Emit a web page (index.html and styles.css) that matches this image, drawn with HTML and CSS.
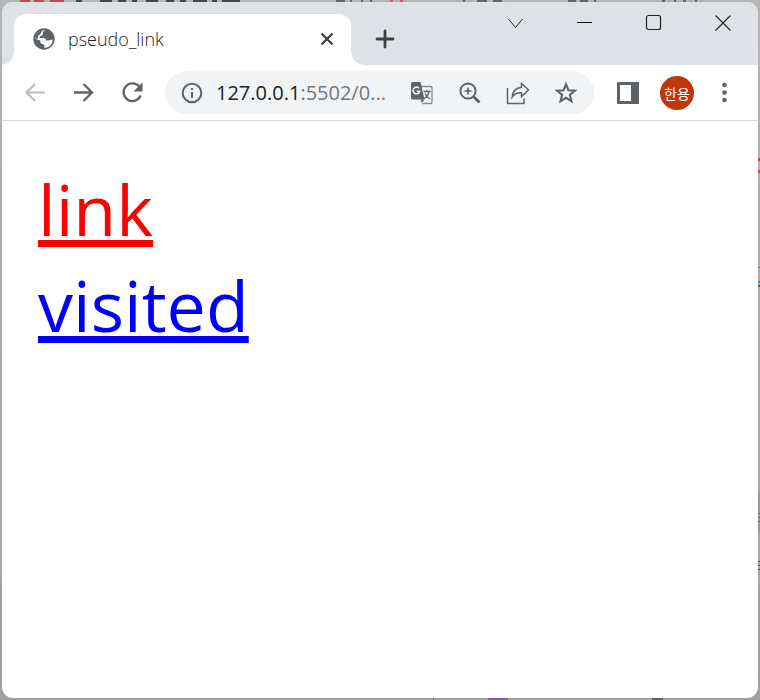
FILE: index.html
```html
<!DOCTYPE html>
<html lang="ko">
<head>
<meta charset="utf-8">
<title>pseudo_link</title>
<link rel="stylesheet" href="styles.css">
</head>
<body>
<svg class="desk desk-top" height="2" aria-hidden="true">
  <path d="M20 1h10M34 1h10M50 1h14" stroke="#c24b4b" stroke-width="2"/>
  <path d="M76 1h6M100 1h12M118 1h8M132 1h5M146 1h12M166 1h8M180 1h6M193 1h14M212 1h5M222 1h18" stroke="#454545" stroke-width="2"/>
  <path d="M336 1h9M350 1h2M361 1h2M370 1h2M463 1h2M477 1h10M493 1h9M568 1h8M580 1h8M594 1h2M662 1h3M674 1h2M683 1h3M695 1h2" stroke="#666" stroke-width="2"/>
  <path d="M390 1h3M400 1h3" stroke="#cf5b5b" stroke-width="2"/>
</svg>
<svg class="desk desk-side" width="2" aria-hidden="true">
  <path d="M1 158v3M1 170v3" stroke="#d04a4a" stroke-width="2"/>
  <path d="M1 267v1M1 281v2" stroke="#3f7fb5" stroke-width="2"/>
  <path d="M1 285v2M1 513v1M1 517v1M1 521v1M1 561v1M1 565v1M1 569v1" stroke="#555" stroke-width="2"/>
  <path d="M1 492v41" stroke="#888" stroke-width="2" opacity=".4"/>
</svg>
<svg class="desk desk-bottom" height="2" aria-hidden="true">
  <path d="M433 1h1" stroke="#666" stroke-width="2"/>
  <path d="M488 1h20" stroke="#7a60a0" stroke-width="2"/>
  <path d="M652 1h11" stroke="#606060" stroke-width="2"/>
</svg>
<div class="window">
  <header class="tabstrip">
    <div class="tab">
      <svg width="24" height="24" viewBox="0 0 24 24" aria-hidden="true"><circle cx="12" cy="12" r="10.700" fill="#5f6368"/><path d="M13.500 3.300C11.500 4 10.600 5 10.800 6.500c.2 1.300-.6 2-1.800 2.200-1.300.2-1.700 1-1.400 2.200h3.900c1.700 0 2.600 1 2.600 2.500h2.200c1.500 0 2.600-1 4.400-1 0 4.600-3.700 8.400-8.300 8.400v-2.100c0-1.200-.8-1.800-2-1.800-1.300 0-2-.8-2-2.100v-1.200L3.400 12c-.1-5 4.500-9.500 10.100-8.700z" fill="#fff"/><path d="M3.300 11.500C3.500 7 6.500 4 10.500 3.300 9 5 9.400 6.200 8.500 7 7.300 8 5.800 8.300 6 10.300l-.5 2z" fill="#5f6368"/></svg>
      <span class="tab-title">pseudo_link</span>
      <button class="plain tab-close" aria-label="Close tab"><svg width="14" height="14" viewBox="0 0 14 14"><path d="M1.500 1.500l11 11M12.500 1.500l-11 11" stroke="#3c4043" stroke-width="2.300" fill="none"/></svg></button>
    </div>
    <button class="plain new-tab" aria-label="New tab"><svg width="20" height="20" viewBox="0 0 20 20"><path d="M10 2v16M2 10h16" stroke="#3c4043" stroke-width="2.800" stroke-linecap="round"/></svg></button>
    <div class="captions">
      <button class="plain" aria-label="Search tabs"><svg width="18" height="18" viewBox="0 0 18 18"><path d="M1.500 5l7 8.500 7-8.500" stroke="#222" fill="none"/></svg></button>
      <button class="plain" aria-label="Minimize"><svg width="18" height="18" viewBox="0 0 18 18"><path d="M1 8.500h15" stroke="#111"/></svg></button>
      <button class="plain" aria-label="Maximize"><svg width="18" height="18" viewBox="0 0 18 18"><rect x="1.500" y="1.500" width="14" height="14" rx="2" fill="none" stroke="#222" stroke-width="1.200"/></svg></button>
      <button class="plain" aria-label="Close"><svg width="18" height="18" viewBox="0 0 18 18"><path d="M1.500 1.500l15 15M16.500 1.500l-15 15" stroke="#222" stroke-width="1.100"/></svg></button>
    </div>
  </header>
  <nav class="toolbar" aria-label="Browser">
    <div class="nav-buttons">
      <button class="plain" aria-label="Back"><svg width="24" height="24" viewBox="0 0 24 24"><path d="M22 11.500H4M12 3l-8.500 8.500L12 20" stroke="#bbbdbf" stroke-width="2.200" fill="none"/></svg></button>
      <button class="plain" aria-label="Forward"><svg width="24" height="24" viewBox="0 0 24 24"><path d="M2 11.500h18M11.500 3l8.500 8.500-8.500 8.500" stroke="#5f6368" stroke-width="2.300" fill="none"/></svg></button>
      <button class="plain" aria-label="Reload"><svg width="24" height="24" viewBox="0 0 24 24"><path d="M18.500 6A8.800 8.800 0 1 0 19.600 14.500" stroke="#5f6368" stroke-width="2.300" fill="none"/><path d="M21.500 1.500v9h-9z" fill="#5f6368"/></svg></button>
    </div>
    <div class="omnibox">
      <button class="plain" aria-label="Site information"><svg width="22" height="22" viewBox="0 0 22 22"><circle cx="11" cy="11" r="9.300" fill="none" stroke="#5f6368" stroke-width="2"/><path d="M11 10v6M11 6v2" stroke="#5f6368" stroke-width="2"/></svg></button>
      <span class="url"><span class="host">127.0.0.1</span>:5502/0...</span>
      <div class="actions">
        <button class="plain" aria-label="Translate"><svg width="24" height="24" viewBox="0 0 24 24"><path d="M11 5.500h10q1 0 1 1v15q0 1-1 1h-8.500" stroke="#85888b" stroke-width="1.300" fill="none"/><path d="M2.500 1h8l4 17.500h-12Q1 18.500 1 17V2.500Q1 1 2.500 1z" fill="#5f6368"/><path d="M10.500 18.500h4l-2.800 3.500z" fill="#5f6368"/><path d="M9 7.200a3.400 3.400 0 1 0 .8 3H6.800" stroke="#f1f3f4" stroke-width="1.600" fill="none"/><path d="M13.500 10.500h7M17 9v1.500M19.200 10.500q-1 4.500-5 7M15 12.500q1.500 3.500 5 5.500" stroke="#5f6368" stroke-width="1.300" fill="none"/></svg></button>
        <button class="plain" aria-label="Zoom"><svg width="24" height="24" viewBox="0 0 24 24"><circle cx="10" cy="10" r="7.600" fill="none" stroke="#5f6368" stroke-width="2"/><path d="M10 6.500v7M6.500 10h7" stroke="#5f6368" stroke-width="1.700"/><path d="M15.500 15.500l6 6" stroke="#5f6368" stroke-width="2.800"/></svg></button>
        <button class="plain" aria-label="Share"><svg width="24" height="24" viewBox="0 0 24 24"><path d="M1.500 7v15.500h16.500v-5" stroke="#5f6368" stroke-width="1.500" fill="none"/><path d="M15.500 2.500l7 6.500-7 6.500v-3.700c-4.500-.2-7.300 1.300-9.300 4.200.5-5.500 3.500-9 9.300-9.700z" stroke="#5f6368" stroke-width="1.500" fill="none"/></svg></button>
        <button class="plain" aria-label="Bookmark"><svg width="24" height="24" viewBox="0 0 24 24"><path d="M12 3.200l2.400 6 6.500.5-5 4.200 1.600 6.400-5.500-3.500-5.500 3.500 1.600-6.400-5-4.200 6.500-.5z" stroke="#5f6368" stroke-width="2.100" fill="none"/></svg></button>
      </div>
    </div>
    <button class="plain" aria-label="Side panel"><svg width="22" height="22" viewBox="0 0 22 22"><path d="M0 0h22v22H0zM3 3v16h11V3z" fill="#5f6368" fill-rule="evenodd"/></svg></button>
    <button class="plain avatar">한용</button>
    <button class="plain" aria-label="Menu"><svg width="24" height="24" viewBox="0 0 24 24"><g fill="#5f6368"><circle cx="12.500" cy="4" r="2.300"/><circle cx="12.500" cy="11.500" r="2.300"/><circle cx="12.500" cy="19" r="2.300"/></g></svg></button>
  </nav>
  <main class="page">
    <a class="demo red" href="#link">link</a>
    <a class="demo blue" href="#visited">visited</a>
  </main>
</div>
</body>
</html>
```
FILE: styles.css
```css
* { box-sizing: border-box; }
body {
  margin: 0;
  padding: 2px;
  min-height: 100vh;
  display: flex;
  background: linear-gradient(#b4b4b4, #a0a0a0);
  font-family: "Open Sans", "Noto Sans CJK KR", sans-serif;
}
.desk { position: absolute; }
.desk-top { top: 0; left: 0; width: 100%; }
.desk-side { top: 0; right: 0; height: 100%; }
.desk-bottom { bottom: 0; left: 0; width: 100%; }
.window {
  flex: 1;
  display: flex;
  flex-direction: column;
  background: #fff;
  border-radius: 11px;
  overflow: hidden;
}
.plain {
  display: flex;
  align-items: center;
  justify-content: center;
  padding: 0;
  border: 0;
  background: none;
  font: inherit;
}
.tabstrip {
  display: flex;
  height: 63px;
  padding-left: 12px;
  background: #dee1e6;
}
.tab {
  position: relative;
  display: flex;
  align-items: center;
  width: 337px;
  margin-top: 12px;
  padding: 0 17px 2px 18px;
  background: #fff;
  border-radius: 12px 12px 0 0;
}
.tab::before, .tab::after {
  content: "";
  position: absolute;
  bottom: 0;
  width: 12px;
  height: 12px;
}
.tab::before { right: 100%; background: radial-gradient(circle at 0 0, #dee1e6 11px, #fff 12px); }
.tab::after { left: 100%; background: radial-gradient(circle at 100% 0, #dee1e6 11px, #fff 12px); }
.tab-title {
  margin-left: 12px;
  font-size: 18px;
  font-weight: 300;
  line-height: 24px;
  color: #202124;
}
.tab-close { margin-left: auto; }
.new-tab { margin: 12px 0 2px 24px; }
.captions {
  display: flex;
  gap: 51px;
  height: 42px;
  margin-left: auto;
  padding-right: 26px;
}
.toolbar {
  display: flex;
  align-items: center;
  height: 56px;
  padding: 0 22px 0 21px;
  border-bottom: 1px solid #d9dadb;
}
.nav-buttons { display: flex; gap: 25px; }
.omnibox {
  flex: 1;
  display: flex;
  align-items: center;
  height: 43px;
  margin: 0 23px 0 20px;
  padding: 0 16px;
  border-radius: 22px;
  background: #f1f3f4;
}
.url {
  margin-left: 13px;
  font-size: 20px;
  line-height: 28px;
  color: #74777b;
}
.host { color: #202124; }
.actions { display: flex; gap: 24px; margin-left: auto; }
.avatar {
  width: 34px;
  height: 34px;
  margin: 0 18px 0 21px;
  border-radius: 50%;
  background: #c1350b;
  color: #fff;
  font-size: 14px;
}
.page {
  display: flex;
  flex-direction: column;
  align-items: flex-start;
  padding: 40px 36px;
}
.demo {
  font-size: 70px;
  line-height: 96px;
  text-decoration-line: underline;
  text-decoration-thickness: 7px;
  text-underline-offset: 4px;
  text-decoration-skip-ink: none;
}
.red { color: #f00; }
.blue { color: #00f; }
```
